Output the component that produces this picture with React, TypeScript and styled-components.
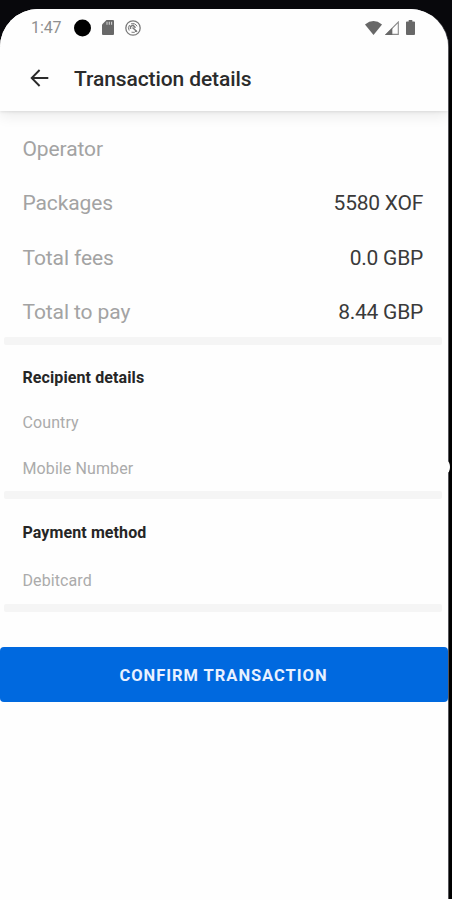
import React from "react";
import styled, { createGlobalStyle } from "styled-components";

const GlobalStyle = createGlobalStyle`
  * { box-sizing: border-box; }
  body { margin: 0; background: #050507; }
`;

const Device = styled.main`
  position: relative;
  width: 452px;
  height: 900px;
  padding-top: 9px;
  overflow: hidden;
  border-bottom: 1px solid #fefefe;
  background: linear-gradient(#08080c 0, #08080c 40px, #000 60px);
  font-family: Roboto, "Liberation Sans", sans-serif;
`;

const Screen = styled.div`
  display: flex;
  flex-direction: column;
  width: 448px;
  height: 891px;
  background: #fefefe;
  border-radius: 38px 38px 0 0;
  overflow: hidden;
  box-shadow: 1px 0 0 #55555a;
`;

const EdgeNotch = styled.span`
  position: absolute;
  top: 461px;
  left: 444px;
  width: 6px;
  height: 12px;
  border-radius: 50%;
  background: #fefefe;
`;

const StatusBar = styled.div`
  position: relative;
  z-index: 1;
  display: flex;
  align-items: center;
  flex: none;
  height: 37px;
  padding: 0 33px 0 31px;
  background: #fefefe;
`;

const Clock = styled.span`
  width: 43px;
  font-size: 16px;
  letter-spacing: -0.1px;
  color: #8f8f8f;
`;

const StatusIcons = styled.div<{ $end?: boolean }>`
  display: flex;
  align-items: center;
  gap: ${(p) => (p.$end ? "3px" : "11px")};
  margin-left: ${(p) => (p.$end ? "auto" : "0")};
  svg { display: block; flex: none; }
  svg:last-child { margin-left: ${(p) => (p.$end ? "4px" : "0")}; }
`;

const AppBar = styled.header`
  display: flex;
  align-items: center;
  flex: none;
  height: 65px;
  padding: 0 0 2px 30px;
  box-shadow: 0 1px 3px rgba(0, 0, 0, 0.09), 0 4px 14px rgba(0, 0, 0, 0.09);
`;

const BackButton = styled.button`
  display: flex;
  width: 44px;
  padding: 1px 0 0;
  border: 0;
  background: none;
`;

const Title = styled.h1`
  margin: 2px 0 0;
  font-size: 21px;
  font-weight: 500;
  line-height: 26px;
  letter-spacing: -0.1px;
  color: #2b2b2b;
`;

const Summary = styled.dl`
  flex: none;
  height: 226px;
  margin: 0;
  padding: 11px 25px 0 22.5px;
`;

const SummaryRow = styled.div`
  display: flex;
  align-items: center;
  justify-content: space-between;
  height: 54.3px;
  font-size: 21px;
`;

const Label = styled.dt`
  color: #a3a3a3;
  letter-spacing: -0.1px;
`;

const Value = styled.dd`
  margin: 0;
  color: #3a3a3a;
  letter-spacing: -0.25px;
`;

const Divider = styled.hr`
  flex: none;
  width: 438px;
  height: 8px;
  margin: 0 0 0 4px;
  border: 0;
  border-radius: 2px;
  background: #f5f5f5;
`;

const Section = styled.section<{ $height: number; $top: number }>`
  flex: none;
  height: ${(p) => p.$height}px;
  padding: ${(p) => p.$top}px 22.5px 0;
`;

const SectionTitle = styled.h2`
  margin: 0;
  font-size: 16px;
  font-weight: 700;
  line-height: 20px;
  letter-spacing: 0.1px;
  color: #262626;
`;

const Field = styled.p<{ $gap: number }>`
  margin: ${(p) => p.$gap}px 0 0;
  font-size: 16px;
  line-height: 20px;
  letter-spacing: 0.1px;
  color: #ababab;
`;

const ConfirmButton = styled.button`
  flex: none;
  height: 55px;
  margin: 35px 0 0;
  padding: 2px 1px 0 0;
  border: 0;
  border-radius: 4px;
  background: #0069df;
  color: #e8f1ff;
  font: 700 16.5px Roboto, "Liberation Sans", sans-serif;
  letter-spacing: 0.97px;
`;

const DotIcon = () => (
  <svg width="17" height="18" viewBox="0 0 17 18">
    <circle cx="8.5" cy="9" r="8.5" fill="#000" />
  </svg>
);

const SdCardIcon = () => (
  <svg width="12" height="15" viewBox="0 0 12 15">
    <path d="M4.5 0H11q1 0 1 1v13q0 1-1 1H1q-1 0-1-1V4.5z" fill="#686868" />
    <path d="M5 1.8v3M7.3 1.8v3M9.6 1.8v3" stroke="#d0d0d0" strokeWidth="1.1" />
  </svg>
);

const SyncIcon = () => (
  <svg width="16" height="16" viewBox="0 0 16 16" fill="none" stroke="#7a7a7a">
    <circle cx="8" cy="8" r="7.2" strokeWidth="1.3" />
    <path d="M4.2 10.5A4.5 4.5 0 0 1 4.6 5M6 3.9A4.5 4.5 0 0 1 12 6.3M11.6 10.7A4.5 4.5 0 0 1 6.5 12.2" strokeWidth="1" />
    <path d="M5.5 9V6.5L8 5.2 10.5 7.8M7.5 7.5 12 11.8" strokeWidth="1.5" />
  </svg>
);

const WifiIcon = () => (
  <svg width="17" height="14" viewBox="0 0 17 14">
    <path d="M0 3.4Q8.5-3.4 17 3.4L8.5 14z" fill="#686868" />
  </svg>
);

const SignalIcon = () => (
  <svg width="14" height="14" viewBox="0 0 14 14">
    <path d="M13.3 1V13.4H1z" fill="none" stroke="#8a8a8a" strokeWidth="1.1" />
    <path d="M0 14 7.3 6.7V14z" fill="#686868" />
  </svg>
);

const BatteryIcon = () => (
  <svg width="9" height="15" viewBox="0 0 10 16" preserveAspectRatio="none">
    <path d="M3 0h4v1.5h2q1 0 1 1V15q0 1-1 1H1q-1 0-1-1V2.5q0-1 1-1h2z" fill="#686868" />
  </svg>
);

const ArrowIcon = () => (
  <svg width="19" height="18" viewBox="0 0 19 18" fill="none" stroke="#2b2b2b" strokeWidth="1.9">
    <path d="M9.6 1 1.7 9l7.9 8M1.7 9H18.3" />
  </svg>
);

const summary = [
  { label: "Operator", value: "" },
  { label: "Packages", value: "5580 XOF" },
  { label: "Total fees", value: "0.0 GBP" },
  { label: "Total to pay", value: "8.44 GBP" },
];

export default function App() {
  return (
    <>
      <GlobalStyle />
      <Device>
        <Screen>
          <StatusBar>
            <Clock>1:47</Clock>
            <StatusIcons>
              <DotIcon />
              <SdCardIcon />
              <SyncIcon />
            </StatusIcons>
            <StatusIcons $end>
              <WifiIcon />
              <SignalIcon />
              <BatteryIcon />
            </StatusIcons>
          </StatusBar>
          <AppBar>
            <BackButton aria-label="Back">
              <ArrowIcon />
            </BackButton>
            <Title>Transaction details</Title>
          </AppBar>
          <Summary>
            {summary.map(({ label, value }) => (
              <SummaryRow key={label}>
                <Label>{label}</Label>
                <Value>{value}</Value>
              </SummaryRow>
            ))}
          </Summary>
          <Divider />
          <Section $height={146} $top={23}>
            <SectionTitle>Recipient details</SectionTitle>
            <Field $gap={25}>Country</Field>
            <Field $gap={26}>Mobile Number</Field>
          </Section>
          <Divider />
          <Section $height={105} $top={24}>
            <SectionTitle>Payment method</SectionTitle>
            <Field $gap={28}>Debitcard</Field>
          </Section>
          <Divider />
          <ConfirmButton>CONFIRM TRANSACTION</ConfirmButton>
        </Screen>
        <EdgeNotch />
      </Device>
    </>
  );
}
